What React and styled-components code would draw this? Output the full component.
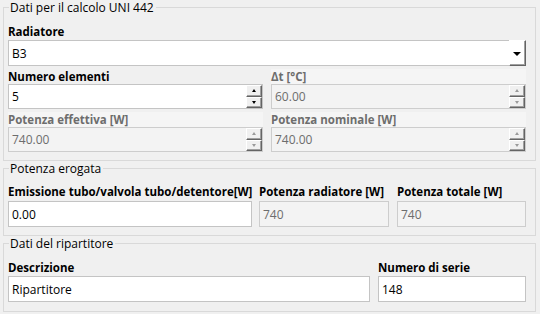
import React from "react"
import styled, { createGlobalStyle } from "styled-components"

const GlobalStyle = createGlobalStyle`
  html, body {
    margin: 0;
    padding: 0;
    background: #f0f0f0;
  }
  body {
    font-family: "Open Sans", "Noto Sans", sans-serif;
    font-size: 12px;
    color: #000;
  }
`

const Page = styled.div`
  width: 540px;
  height: 314px;
  box-sizing: border-box;
  padding: 0 4px 0 3px;
  display: flex;
  flex-direction: column;
  overflow: hidden;
`

const Group = styled.fieldset`
  margin: 0;
  border: 1px solid #d9d9d9;
  padding: ${p => p.$pad || "9px"} 9px ${p => p.$bottom || "8px"} 4px;
  min-width: 0;
`

const Legend = styled.legend`
  padding: 0 2px 0 1px;
  margin-left: 1px;
  line-height: 15px;
  font-size: 12px;
  color: #000;
`

const Grid = styled.div`
  display: grid;
  grid-template-columns: ${p => p.$cols};
  column-gap: ${p => p.$gap || "8px"};
  row-gap: 3px;
`

const Field = styled.div`
  display: flex;
  flex-direction: column;
  min-width: 0;
`

const Label = styled.div`
  height: ${p => p.$h || 15}px;
  line-height: ${p => p.$h || 15}px;
  font-weight: 700;
  font-size: 11.5px;
  white-space: nowrap;
  color: ${p => (p.$disabled ? "#6d6d6d" : "#000")};
  background: ${p => (p.$disabled ? "#f5f5f5" : "transparent")};
`

const Box = styled.div`
  box-sizing: border-box;
  height: ${p => p.$h || 25}px;
  border: 1px solid ${p => (p.$disabled ? "#cdcdcd" : "#c4c4c4")};
  background: ${p => (p.$disabled ? "#f3f3f3" : "#fff")};
  color: ${p => (p.$disabled ? "#6d6d6d" : "#000")};
  display: flex;
  align-items: center;
  padding-left: 3px;
  font-size: 12px;
`

const Value = styled.span`
  flex: 1;
  white-space: nowrap;
`

const Spin = styled.div`
  display: flex;
  flex-direction: column;
  align-self: stretch;
  justify-content: center;
`

const SpinButton = styled.div`
  box-sizing: border-box;
  width: 16px;
  height: 12px;
  background: #f0f0f0;
  border-style: solid;
  border-width: 1px;
  border-color: #ffffff #646464 #646464 #ffffff;
  box-shadow: inset -1px -1px 0 #a0a0a0;
  display: flex;
  align-items: center;
  justify-content: center;

  &::after {
    content: "";
    width: 0;
    height: 0;
    border-left: 2.5px solid transparent;
    border-right: 2.5px solid transparent;
    ${p =>
      p.$down
        ? `border-top: 3px solid ${p.$disabled ? "#9a9a9a" : "#000"};`
        : `border-bottom: 3px solid ${p.$disabled ? "#9a9a9a" : "#000"};`}
    margin-right: 1px;
  }
`

const DropButton = styled.div`
  box-sizing: border-box;
  align-self: stretch;
  width: 17px;
  border-style: solid;
  border-width: 1px;
  border-color: #ffffff #646464 #646464 #ffffff;
  box-shadow: inset -1px -1px 0 #a0a0a0;
  background: #fff;
  display: flex;
  align-items: center;
  justify-content: center;
  margin: -1px -1px -1px 0;

  &::after {
    content: "";
    width: 0;
    height: 0;
    border-left: 4px solid transparent;
    border-right: 4px solid transparent;
    border-top: 4px solid #000;
    margin: 1px 1px 0 0;
  }
`

const SpinBox = ({ value, disabled }) => (
  <Box $disabled={disabled}>
    <Value>{value}</Value>
    <Spin>
      <SpinButton $disabled={disabled} />
      <SpinButton $disabled={disabled} $down />
    </Spin>
  </Box>
)

const App = () => (
  <>
    <GlobalStyle />
    <Page>
      <Group>
        <Legend>Dati per il calcolo UNI 442</Legend>
        <Field>
          <Label $h={16}>Radiatore</Label>
          <Box $h={26}>
            <Value>B3</Value>
            <DropButton />
          </Box>
        </Field>
        <Grid $cols="1fr 1fr" style={{ marginTop: 3 }}>
          <Field>
            <Label>Numero elementi</Label>
            <SpinBox value="5" />
          </Field>
          <Field>
            <Label $disabled>Δt [°C]</Label>
            <SpinBox value="60.00" disabled />
          </Field>
          <Field>
            <Label $disabled>Potenza effettiva [W]</Label>
            <SpinBox value="740.00" disabled />
          </Field>
          <Field>
            <Label $disabled>Potenza nominale [W]</Label>
            <SpinBox value="740.00" disabled />
          </Field>
        </Grid>
      </Group>

      <Group $pad="6px">
        <Legend>Potenza erogata</Legend>
        <Grid $cols="244px 130px 1fr" $gap="7px">
          <Field>
            <Label $h={19}>Emissione tubo/valvola tubo/detentore[W]</Label>
            <Box $h={26}>
              <Value>0.00</Value>
            </Box>
          </Field>
          <Field>
            <Label $h={19}>Potenza radiatore [W]</Label>
            <Box $h={26} $disabled>
              <Value>740</Value>
            </Box>
          </Field>
          <Field style={{ marginLeft: 1 }}>
            <Label $h={19}>Potenza totale [W]</Label>
            <Box $h={26} $disabled>
              <Value>740</Value>
            </Box>
          </Field>
        </Grid>
      </Group>

      <Group $pad="8px" $bottom="9px">
        <Legend>Dati del ripartitore</Legend>
        <Grid $cols="1fr 148px">
          <Field>
            <Label $h={17}>Descrizione</Label>
            <Box $h={26}>
              <Value>Ripartitore</Value>
            </Box>
          </Field>
          <Field>
            <Label $h={17}>Numero di serie</Label>
            <Box $h={26}>
              <Value>148</Value>
            </Box>
          </Field>
        </Grid>
      </Group>
    </Page>
  </>
)

export default App
